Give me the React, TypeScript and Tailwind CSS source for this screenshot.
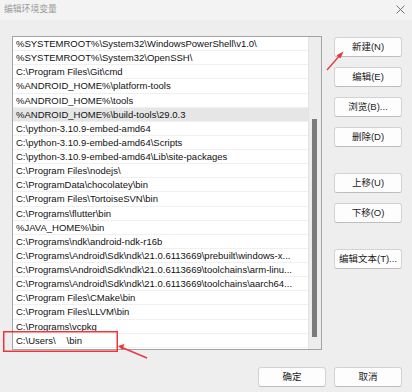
const rows = [
  "%SYSTEMROOT%\\System32\\WindowsPowerShell\\v1.0\\",
  "%SYSTEMROOT%\\System32\\OpenSSH\\",
  "C:\\Program Files\\Git\\cmd",
  "%ANDROID_HOME%\\platform-tools",
  "%ANDROID_HOME%\\tools",
  "%ANDROID_HOME%\\build-tools\\29.0.3",
  "C:\\python-3.10.9-embed-amd64",
  "C:\\python-3.10.9-embed-amd64\\Scripts",
  "C:\\python-3.10.9-embed-amd64\\Lib\\site-packages",
  "C:\\Program Files\\nodejs\\",
  "C:\\ProgramData\\chocolatey\\bin",
  "C:\\Program Files\\TortoiseSVN\\bin",
  "C:\\Programs\\flutter\\bin",
  "%JAVA_HOME%\\bin",
  "C:\\Programs\\ndk\\android-ndk-r16b",
  "C:\\Programs\\Android\\Sdk\\ndk\\21.0.6113669\\prebuilt\\windows-x...",
  "C:\\Programs\\Android\\Sdk\\ndk\\21.0.6113669\\toolchains\\arm-linu...",
  "C:\\Programs\\Android\\Sdk\\ndk\\21.0.6113669\\toolchains\\aarch64...",
  "C:\\Program Files\\CMake\\bin",
  "C:\\Program Files\\LLVM\\bin",
  "C:\\Programs\\vcpkg",
];

const selected = 5;

function Btn({ label, className = "" }: { label: string; className?: string }) {
  return (
    <button
      className={
        "h-[20px] w-[68px] rounded-[3px] border border-[#d3d3d3] border-b-[#bdbdbd] bg-[#fdfdfd] text-[9.5px] leading-none text-[#1b1b1b] " +
        className
      }
    >
      {label}
    </button>
  );
}

export default function App() {
  return (
    <div
      className="relative flex h-[392px] w-[412px] flex-col overflow-hidden bg-[#eeeeee]"
      style={{ fontFamily: '"Liberation Sans", "Noto Sans CJK SC", sans-serif' }}
    >
      {/* title bar */}
      <div className="flex h-[20px] items-center justify-between bg-[#f3f3f3] pl-[4px] pr-[7px]">
        <span className="text-[8.8px] text-[#9a9a9a]">编辑环境变量</span>
        <svg width="9" height="9" viewBox="0 0 9 9" className="mt-[-1px]">
          <path d="M0.5 0.5L8.5 8.5M8.5 0.5L0.5 8.5" stroke="#666" strokeWidth="0.9" />
        </svg>
      </div>

      <div className="flex items-start">
        {/* list box */}
        <div className="ml-[12px] mt-[16px] flex h-[314px] w-[310px] border border-[#a3a3a3] bg-white">
          <div className="flex w-[295px] flex-col">
            {rows.map((r, i) => (
              <div
                key={i}
                className={
                  "h-[14.13px] whitespace-nowrap border-b border-[#f0f0f0] pl-[3px] text-[9.5px] leading-[13px] text-[#111] " +
                  (i === selected ? "bg-[#e6e6e6]" : "")
                }
              >
                {r}
              </div>
            ))}
            <div className="flex h-[14.13px] border-b border-[#f0f0f0] pl-[3px] text-[9.5px] leading-[13px] text-[#111]">
              <span>C:\Users\</span>
              <span className="w-[11px]" />
              <span>\bin</span>
            </div>
          </div>
          <div className="flex w-[13px] justify-center border-l border-[#e4e4e4] bg-[#ededed]">
            <div className="ml-[-1px] mt-[82px] h-[218px] w-[5px] bg-[#7c7c7c]" />
          </div>
        </div>

        {/* side buttons */}
        <div className="ml-[12px] mt-[17px] flex flex-col">
          <Btn label="新建(N)" />
          <Btn label="编辑(E)" className="mt-[10px]" />
          <Btn label="浏览(B)..." className="mt-[10px]" />
          <Btn label="删除(D)" className="mt-[10px]" />
          <Btn label="上移(U)" className="mt-[26px]" />
          <Btn label="下移(O)" className="mt-[10px]" />
          <Btn label="编辑文本(T)..." className="mt-[26px]" />
        </div>
      </div>

      {/* bottom buttons */}
      <div className="mt-[17px] flex justify-end gap-[8px] pr-[10px]">
        <Btn label="确定" className="w-[67px]" />
        <Btn label="取消" />
      </div>

      {/* annotation overlay: red box + arrows */}
      <svg
        className="pointer-events-none absolute left-0 top-0"
        width="412"
        height="392"
        viewBox="0 0 412 392"
      >
        <rect x="3.75" y="331.75" width="113.5" height="19.5" fill="none" stroke="#e8383d" strokeWidth="1.5" />
        <g stroke="#e8383d" strokeWidth="1.4" fill="#e8383d">
          <line x1="327" y1="70" x2="341" y2="54" />
          <path d="M343.5 51.5L336.6 55.3L340.5 58.4Z" stroke="none" />
          <line x1="147" y1="358" x2="122" y2="347.5" />
          <path d="M118 346L124.3 344.1L122.5 350Z" stroke="none" />
        </g>
      </svg>
    </div>
  );
}
